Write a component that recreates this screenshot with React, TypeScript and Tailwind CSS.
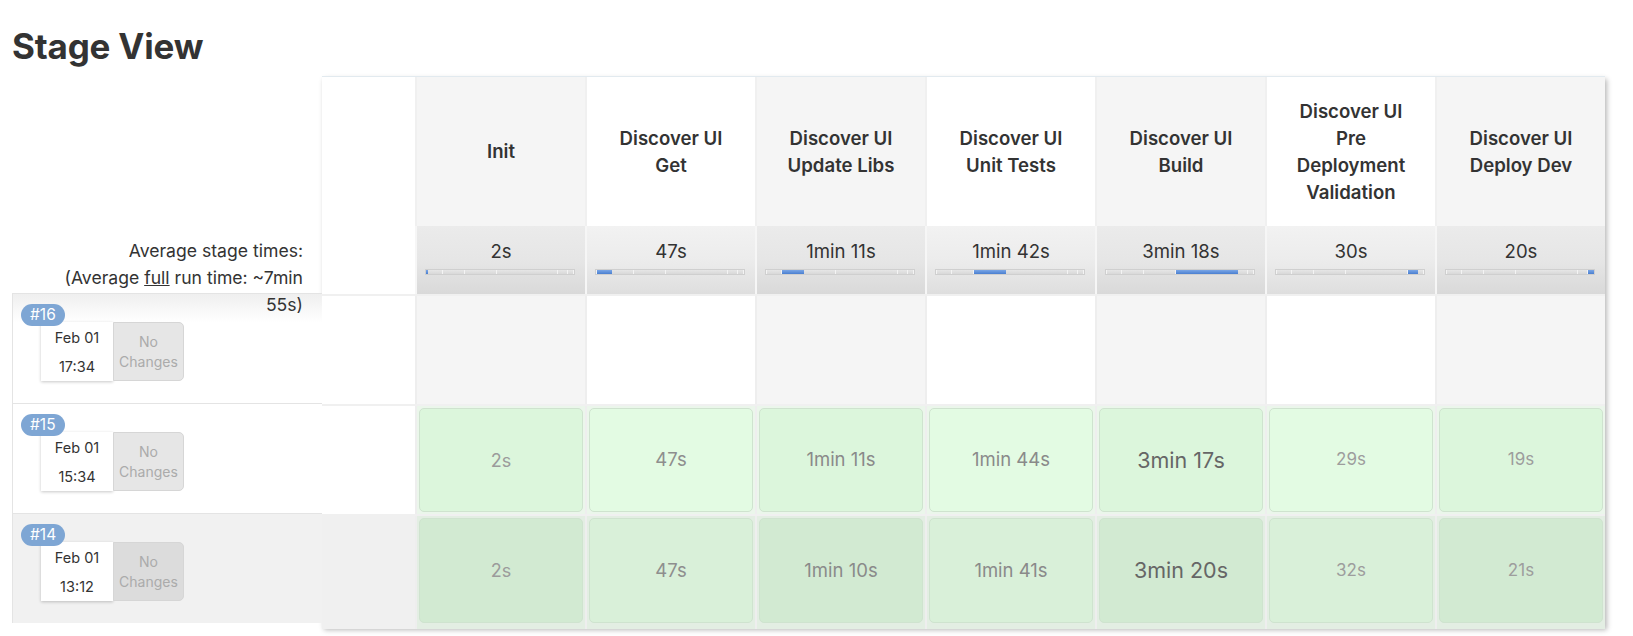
import React from 'react';

type Stage = { name: string[]; avg: string; secs: number };

const stages: Stage[] = [
  { name: ['Init'], avg: '2s', secs: 2 },
  { name: ['Discover UI', 'Get'], avg: '47s', secs: 47 },
  { name: ['Discover UI', 'Update Libs'], avg: '1min 11s', secs: 71 },
  { name: ['Discover UI', 'Unit Tests'], avg: '1min 42s', secs: 102 },
  { name: ['Discover UI', 'Build'], avg: '3min 18s', secs: 198 },
  { name: ['Discover UI', 'Pre', 'Deployment', 'Validation'], avg: '30s', secs: 30 },
  { name: ['Discover UI', 'Deploy Dev'], avg: '20s', secs: 20 },
];

const runs = [
  { id: 16, date: 'Feb 01', time: '17:34', cells: null as string[] | null },
  { id: 15, date: 'Feb 01', time: '15:34', cells: ['2s', '47s', '1min 11s', '1min 44s', '3min 17s', '29s', '19s'] },
  { id: 14, date: 'Feb 01', time: '13:12', cells: ['2s', '47s', '1min 10s', '1min 41s', '3min 20s', '32s', '21s'] },
];

const durText = [
  'text-[18px] text-[#9b9b9b]',
  'text-[18.5px] text-[#8e8e8e]',
  'text-[18.5px] text-[#8a8a8a]',
  'text-[18.5px] text-[#8a8a8a]',
  'text-[21.5px] text-[#666]',
  'text-[17px] text-[#9d9d9d]',
  'text-[17px] text-[#9d9d9d]',
];

const colBg = ['bg-[#f5f5f5]', 'bg-white'];
const avgBg = [
  'bg-linear-to-b from-[#ebebeb] via-[#e6e6e6] to-[#d9d9d9]',
  'bg-linear-to-b from-[#f2f2f2] via-[#ececec] to-[#dedede]',
];
const greenBg = {
  15: ['bg-[#dcf6dc]', 'bg-[#e3fbe3]'],
  14: ['bg-[#d2ead2]', 'bg-[#d9f0d9]'],
} as Record<number, string[]>;

function TimeBar({ active }: { active: number }) {
  const total = stages.reduce((s, x) => s + x.secs, 0);
  return (
    <div className="ml-[8px] w-[150px] h-[6px] flex bg-[#dadada] border border-[#cfcfcf]">
      {stages.map((s, i) => (
        <div
          key={i}
          className={i == active
            ? 'h-full bg-linear-to-b from-[#7aa6e6] to-[#4a7fd0]'
            : 'h-full bg-linear-to-b from-[#e6e6e6] to-[#d8d8d8] border-r border-[#f4f4f4]'}
          style={{ width: `${(s.secs / total) * 100}%`, minWidth: i == active ? 2 : 0 }}
        />
      ))}
    </div>
  );
}

function BuildRow({ id, date, time, gray, first }: { id: number, date: string, time: string, gray: boolean, first: boolean }) {
  return (
    <div className={`relative h-[110px] border-t border-l border-[#e4e4e4] ${gray ? 'bg-[#f1f1f1]' : first ? 'bg-linear-to-b from-[#efefef] to-white to-[26%]' : 'bg-white'}`}>
      <div className="absolute left-[8px] top-[10px] z-10 h-[22px] px-[9px] rounded-full bg-[#7ea6d4] text-white text-[15.5px] leading-[22px]">
        #{id}
      </div>
      <div className="flex ml-[28px] mt-[28px]">
        <div className="w-[72px] h-[59px] bg-white shadow-[0_1px_3px_rgba(0,0,0,0.22)] flex flex-col items-center justify-center text-[14.5px] leading-[29px] text-[#333]">
          <div>{date}</div>
          <div>{time}</div>
        </div>
        <div className={`w-[71px] h-[59px] rounded-r-[5px] border border-[#d6d6d6] ${gray ? 'bg-[#dcdcdc]' : 'bg-[#e6e6e6]'} flex flex-col items-center justify-center text-[14px] leading-[20px] text-[#ababab]`}>
          <div>No</div>
          <div>Changes</div>
        </div>
      </div>
    </div>
  );
}

export default function App(): React.ReactElement {
  return (
    <div className="w-[1633px] h-[636px] bg-white pl-[12px] pt-[25px] text-[#333]" style={{ fontFamily: 'Inter, "Liberation Sans", sans-serif' }}>
      <h1 className="text-[35px] font-bold leading-[42px] text-[#333] tracking-[-0.2px]">Stage View</h1>
      <div className="flex mt-[9px]">
        {/* left column: average label + build list */}
        <div className="w-[310px] flex flex-col pt-[153px]">
          <div className="relative z-20 h-[64px] pt-[8px] pr-[19px] text-right text-[17.6px] leading-[27px] text-[#333]">
            <div>Average stage times:</div>
            <div>(Average <span className="underline">full</span> run time: ~7min</div>
            <div>55s)</div>
          </div>
          {runs.map((r, i) => (
            <BuildRow key={r.id} id={r.id} date={r.date} time={r.time} gray={i == 2} first={i == 0} />
          ))}
        </div>

        {/* stage table */}
        <div className="w-[1283px] h-[551px] bg-white border-t border-[#e2eaef] shadow-[2px_3px_5px_rgba(0,0,0,0.28)]">
          <div className="grid grid-cols-[93px_repeat(7,170px)] h-[149px]">
            <div className="bg-white" />
            {stages.map((s, i) => (
              <div key={i} className={`${colBg[i % 2]} border-l-2 border-[#f0f0f0] flex flex-col items-center justify-center text-center text-[18.6px] font-semibold leading-[27px] text-[#333]`}>
                {s.name.map((n, j) => <div key={j}>{n}</div>)}
              </div>
            ))}
          </div>
          <div className="grid grid-cols-[93px_repeat(7,170px)] h-[68px]">
            <div className="bg-white" />
            {stages.map((s, i) => (
              <div key={i} className={`${avgBg[i % 2]} border-l-2 border-[#f6f6f6] pt-[13px]`}>
                <div className="text-center text-[18.6px] leading-[24px] text-[#333]">{s.avg}</div>
                <div className="mt-[6px]">
                  <TimeBar active={i} />
                </div>
              </div>
            ))}
          </div>
          {runs.map((r, ri) => (
            <div key={r.id} className={`grid grid-cols-[93px_repeat(7,170px)] border-t-2 border-[#f0f0f0] ${ri == 2 ? 'h-[115px]' : 'h-[110px]'}`}>
              <div className={ri == 2 ? 'bg-[#f0f0f0]' : 'bg-white'} />
              {stages.map((s, i) => (
                <div key={i} className={`border-l-2 border-[#eeeeee] p-[2px] ${r.cells ? (ri == 2 ? 'bg-[#e3eee3]' : 'bg-[#ebf6eb]') : colBg[i % 2]} ${ri == 2 ? 'pb-[6px]' : ''}`}>
                  {r.cells && (
                    <div className={`h-full rounded-[5px] border border-[#cfe3cf] ${greenBg[r.id][i % 2]} flex items-center justify-center ${durText[i]}`}>
                      {r.cells[i]}
                    </div>
                  )}
                </div>
              ))}
            </div>
          ))}
        </div>
      </div>
    </div>
  );
}
